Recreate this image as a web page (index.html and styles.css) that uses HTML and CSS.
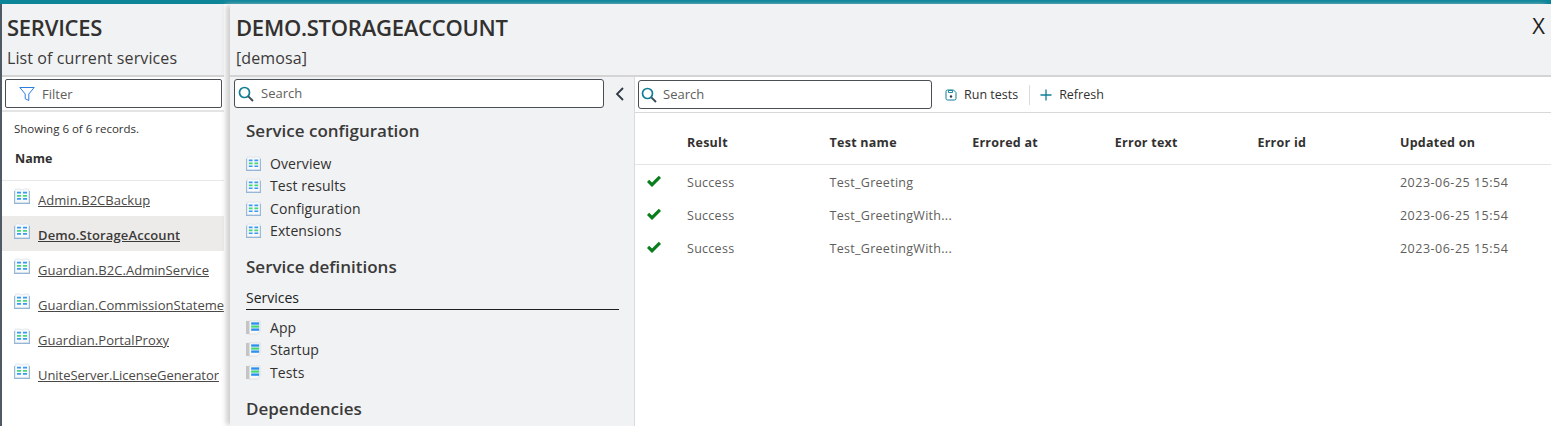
FILE: index.html
```html
<!DOCTYPE html>
<html lang="en">
<head>
<meta charset="utf-8">
<title>Services</title>
<link rel="stylesheet" href="styles.css">
</head>
<body>
<svg class="defs" width="0" height="0" aria-hidden="true">
  <symbol id="book" viewBox="0 0 16 16">
    <path d="M0 3h1.200v11.500H7q1 0 1 .6 0-.6 1-.6h5.800V3H16v13H0z" fill="#93b5d6"/>
    <path d="M1.200 1.200Q5 .2 8 1.800q3-1.600 6.800-.6v13.300H9q-1 0-1 .6 0-.6-1-.6H1.200z" fill="#f7f9fb" stroke="#cbd7e2" stroke-width=".5"/>
    <path d="M3 3.800h4v1.800H3zM9 3.800h4v1.800H9z" fill="#3a9af2"/>
    <path d="M3 6.900h4v1.800H3zM9 6.900h4v1.800H9z" fill="#45d87a"/>
    <path d="M3 10h4v1.800H3zM9 10h4v1.800H9z" fill="#3a9af2"/>
  </symbol>
  <symbol id="doc" viewBox="0 0 16 16">
    <path d="M0 1h5v14H0z" fill="#c4c4c4"/>
    <path d="M3.500 1H15v11l-3 3H3.500z" fill="#f8f8f8" stroke="#d2d2d2" stroke-width=".6"/>
    <path d="M5.500 2.500H14V5H5.500z" fill="#2b8ff0"/>
    <path d="M5.500 5.800H14v2.400H5.500z" fill="#45d87a"/>
    <path d="M5.500 9H14v2.500H5.500z" fill="#2b8ff0"/>
  </symbol>
  <symbol id="search" viewBox="0 0 16 16">
    <circle cx="6.500" cy="6.500" r="5" fill="none" stroke="#0f7f95" stroke-width="1.700"/>
    <path d="M10.300 10.300L15 15" stroke="#3a4a55" stroke-width="1.900" fill="none"/>
  </symbol>
  <symbol id="check" viewBox="0 0 16 13">
    <path d="M1 7l2.200-2.200 2.800 2.800L12.800.8 15 3 6 12z" fill="#0a7d1c"/>
  </symbol>
</svg>

<div class="topbar"></div>
<div class="app">
  <aside class="services">
    <header class="services-head">
      <h1 class="title">SERVICES</h1>
      <p class="subtitle">List of current services</p>
    </header>
    <div class="filter-row">
      <div class="filter">
        <svg class="filter-icon" viewBox="0 0 16 16"><path d="M.8 1.500h14.400L9.800 8v6.500l-3.600-1.800V8z" fill="none" stroke="#2b7de0" stroke-width="1"/></svg>
        <span>Filter</span>
      </div>
    </div>
    <div class="records">Showing 6 of 6 records.</div>
    <div class="name-head">Name</div>
    <ul class="service-list">
      <li class="service"><svg class="svc-icon"><use href="#book"/></svg><a href="#">Admin.B2CBackup</a></li>
      <li class="service active"><svg class="svc-icon"><use href="#book"/></svg><a href="#">Demo.StorageAccount</a></li>
      <li class="service"><svg class="svc-icon"><use href="#book"/></svg><a href="#">Guardian.B2C.AdminService</a></li>
      <li class="service"><svg class="svc-icon"><use href="#book"/></svg><a href="#">Guardian.CommissionStateme</a></li>
      <li class="service"><svg class="svc-icon"><use href="#book"/></svg><a href="#">Guardian.PortalProxy</a></li>
      <li class="service"><svg class="svc-icon"><use href="#book"/></svg><a class="tight" href="#">UniteServer.LicenseGenerator</a></li>
    </ul>
  </aside>

  <main class="detail">
    <header class="detail-head">
      <div>
        <h1 class="title">DEMO.STORAGEACCOUNT</h1>
        <p class="subtitle">[demosa]</p>
      </div>
      <span class="close">X</span>
    </header>
    <div class="detail-body">
      <nav class="nav">
        <div class="nav-search-row">
          <div class="search nav-search">
            <svg class="search-icon"><use href="#search"/></svg>
            <span>Search</span>
          </div>
          <svg class="chevron" viewBox="0 0 10 16"><path d="M8 2L2 8l6 6" fill="none" stroke="#2f3a45" stroke-width="1.800"/></svg>
        </div>
        <h2 class="nav-title">Service configuration</h2>
        <ul class="nav-list">
          <li><svg class="nav-icon"><use href="#book"/></svg>Overview</li>
          <li><svg class="nav-icon"><use href="#book"/></svg>Test results</li>
          <li><svg class="nav-icon"><use href="#book"/></svg>Configuration</li>
          <li><svg class="nav-icon"><use href="#book"/></svg>Extensions</li>
        </ul>
        <h2 class="nav-title second">Service definitions</h2>
        <div class="nav-sub">Services</div>
        <ul class="nav-list">
          <li><svg class="nav-icon"><use href="#doc"/></svg>App</li>
          <li><svg class="nav-icon"><use href="#doc"/></svg>Startup</li>
          <li><svg class="nav-icon"><use href="#doc"/></svg>Tests</li>
        </ul>
        <h2 class="nav-title third">Dependencies</h2>
      </nav>
      <section class="results">
        <div class="toolbar">
          <div class="search tool-search">
            <svg class="search-icon"><use href="#search"/></svg>
            <span>Search</span>
          </div>
          <button class="tool run">
            <svg class="tool-icon" viewBox="0 0 12 12"><path d="M1 2.500A1.500 1.500 0 0 1 2.500 1h6L11 3.500v6A1.500 1.500 0 0 1 9.500 11h-7A1.500 1.500 0 0 1 1 9.500z" fill="none" stroke="#0f7f95" stroke-width="1"/><path d="M3.500 1.500h4v2h-4z" fill="none" stroke="#0f7f95" stroke-width=".9"/><circle cx="6" cy="7.500" r="1.200" fill="#2d3a44"/></svg>
            Run tests
          </button>
          <button class="tool refresh">
            <svg class="tool-icon" viewBox="0 0 12 12"><path d="M6 .5v11M.5 6h11" stroke="#0f7f95" stroke-width="1.300" fill="none"/></svg>
            Refresh
          </button>
        </div>
        <div class="grid grid-head">
          <span></span><span>Result</span><span>Test name</span><span>Errored at</span><span>Error text</span><span>Error id</span><span>Updated on</span>
        </div>
        <div class="rows">
          <div class="grid row">
            <svg class="check"><use href="#check"/></svg><span>Success</span><span>Test_Greeting</span><span></span><span></span><span></span><span class="date">2023-06-25 15:54</span>
          </div>
          <div class="grid row">
            <svg class="check"><use href="#check"/></svg><span>Success</span><span>Test_GreetingWith...</span><span></span><span></span><span></span><span class="date">2023-06-25 15:54</span>
          </div>
          <div class="grid row">
            <svg class="check"><use href="#check"/></svg><span>Success</span><span>Test_GreetingWith...</span><span></span><span></span><span></span><span class="date">2023-06-25 15:54</span>
          </div>
        </div>
      </section>
    </div>
  </main>
</div>
</body>
</html>
```

FILE: styles.css
```css
* { box-sizing: border-box; }
html, body { margin: 0; padding: 0; height: 100%; overflow: hidden; background: #fff; }
body { font-family: "Open Sans", "Noto Sans", sans-serif; color: #323130; font-size: 14px; }
ul { list-style: none; margin: 0; padding: 0; }
h1, h2, p { margin: 0; }
.defs { position: absolute; }

.topbar { height: 4px; background: #0c8599; }
.app { display: flex; height: 422px; }

.services { width: 224px; flex: none; border-left: 2px solid #505a64; background: #fff; overflow: hidden; }
.services-head { height: 73px; background: #f1f2f4; padding: 8px 0 0 5px; border-bottom: 2px solid #d4d4d4; }
.title { font-size: 22px; line-height: 30px; font-weight: 600; color: #323130; letter-spacing: -.25px; white-space: nowrap; }
.subtitle { font-size: 16px; line-height: 24px; margin-top: 4px; color: #3b3a39; letter-spacing: .1px; white-space: nowrap; }

.filter-row { height: 35px; padding: 2px 2px 0 3px; border-bottom: 2px solid #e4e4e4; }
.filter { height: 29px; border: 1px solid #4a4f55; border-radius: 2px; display: flex; align-items: center; padding-left: 13px; color: #605e5c; font-size: 13px; background: #fff; }
.filter-icon { width: 16px; height: 16px; margin-right: 7px; }

.records { font-size: 11.500px; line-height: 16px; padding: 9px 0 0 12px; color: #323130; }
.name-head { font-size: 12.500px; line-height: 18px; font-weight: 700; padding: 13px 0 0 13px; height: 44px; border-bottom: 1px solid #e8e8e8; }

.service { height: 35px; display: flex; align-items: flex-start; padding: 7px 0 0 12px; white-space: nowrap; }
.service.active { background: #edebe9; font-weight: 600; }
.svc-icon { width: 16px; height: 16px; flex: none; margin-right: 8px; }
.service a { min-width: 0; overflow: hidden; font-size: 13px; line-height: 19px; margin-top: 3px; color: #4a4846; letter-spacing: .05px; text-decoration: underline; }
.service a.tight { letter-spacing: -.05px; }
.service.active a { color: #3b3a39; letter-spacing: .12px; }

.detail { flex: 1; min-width: 0; margin-left: 6px; box-shadow: -5px 0 5px -1px #d0d0d0; }
.detail-head { height: 73px; background: #f1f2f4; padding: 8px 6px 0 6px; display: flex; justify-content: space-between; border-bottom: 2px solid #d4d4d4; }
.close { font-size: 22px; line-height: 26px; color: #201f1e; }

.detail-body { display: flex; height: 349px; }
.nav { width: 405px; flex: none; background: #f1f2f4; padding: 2px 15px 0 4px; border-right: 1px solid #d8dbe0; overflow: hidden; }
.nav-search-row { display: flex; align-items: center; height: 29px; margin-right: -15px; }
.search { display: flex; align-items: center; border: 1px solid #4a4f55; border-radius: 3px; background: #fff; color: #605e5c; font-size: 13px; line-height: 25px; }
.search-icon { width: 16px; height: 16px; margin: 0 7px 0 3px; flex: none; }
.nav-search { width: 370px; height: 29px; }
.tool-search .search-icon { margin: 0 6px 0 2px; }
.chevron { width: 10px; height: 16px; margin-left: 11px; }
.nav-title { font-size: 17px; line-height: 24px; font-weight: 600; color: #3b3a39; margin: 11px 0 0 12px; letter-spacing: 0; }
.nav-title.second { margin-top: 13px; }
.nav-title.third { margin-top: 13px; }
.nav-list { margin: 9px 0 0 12px; }
.nav-list li { height: 22.500px; display: flex; align-items: center; font-size: 14px; color: #323130; letter-spacing: .1px; }
.nav-icon { width: 15px; height: 15px; margin-right: 9px; flex: none; }
.nav-sub { margin: 8px 0 0 12px; height: 23px; line-height: 21px; font-size: 14px; font-weight: 500; color: #201f1e; border-bottom: 1px solid #1f1f1f; }
.nav-sub + .nav-list { margin-top: 6px; }

.results { flex: 1; min-width: 0; background: #fff; }
.toolbar { height: 36px; display: flex; align-items: center; padding: 0 0 0 3px; border-bottom: 1px solid #d8d8d8; }
.tool-search { width: 294px; height: 29px; }
.tool { display: flex; align-items: center; height: 20px; border: 0; background: none; padding: 0; font: inherit; font-size: 12.500px; font-weight: 500; color: #323130; letter-spacing: 0; }
.tool-icon { width: 12px; height: 12px; margin-right: 7px; }
.run { margin-left: 13px; padding-right: 11px; border-right: 1px solid #d8dbe0; }
.refresh { margin-left: 10px; }

.grid { display: grid; grid-template-columns: 52px repeat(5, 142.600px) 1fr; align-items: center; font-size: 12.500px; white-space: nowrap; }
.grid-head { height: 52px; padding-top: 8px; border-bottom: 1px solid #e4e4e4; font-weight: 700; color: #323130; letter-spacing: .25px; }
.rows { padding-top: 1px; }
.row { height: 33px; color: #605e5c; letter-spacing: .28px; }
.row .date { letter-spacing: .5px; }
.check { width: 16px; height: 13px; margin-left: 11px; margin-top: -2px; }
```
